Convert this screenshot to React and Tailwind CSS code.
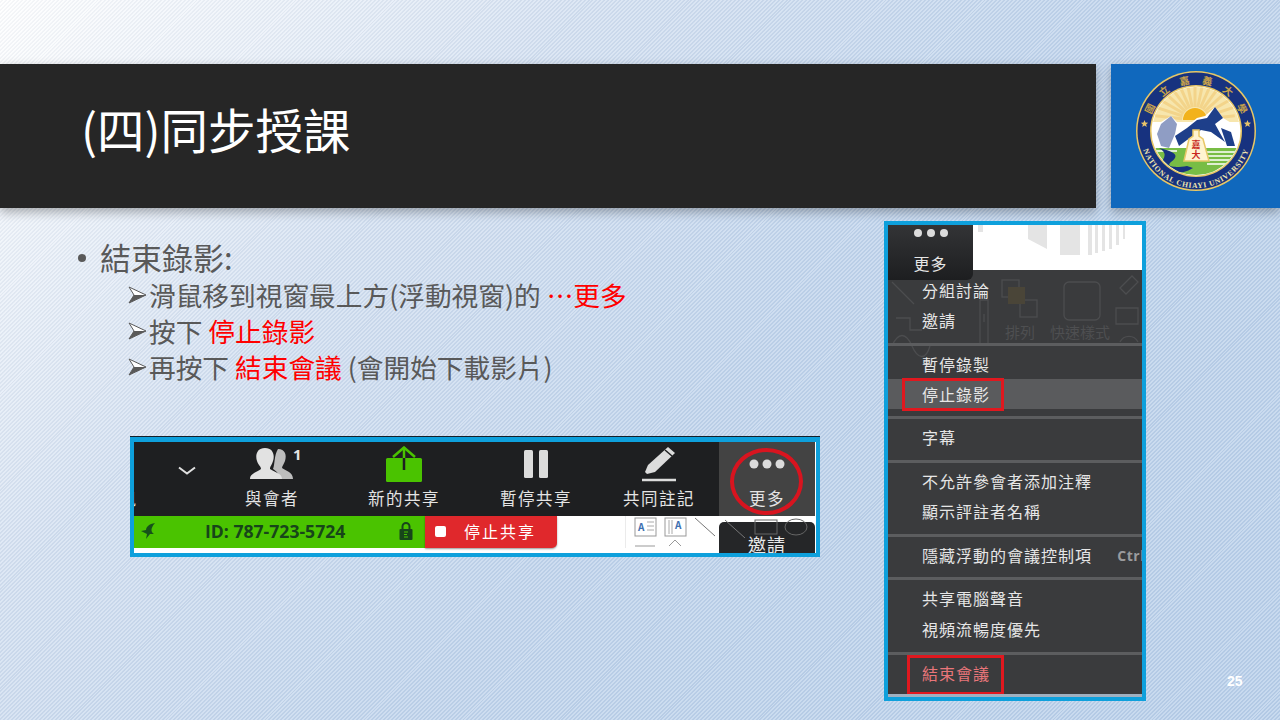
import React from 'react'

const cjk = { fontFamily: '"Noto Sans CJK TC", "Noto Sans", sans-serif' }

const sealChars = [['國', -64], ['立', -38.5], ['嘉', -13], ['義', 13], ['大', 38.5], ['學', 64]]

function Seal() {
  const rays = []
  for (let a = -84; a <= 84; a += 12) {
    const r = a * Math.PI / 180
    rays.push(
      <line key={a} x1={60 + Math.sin(r) * 13} y1={50 - Math.cos(r) * 13} x2={60 + Math.sin(r) * 40} y2={50 - Math.cos(r) * 40} stroke="#f3d48a" strokeWidth="3" />
    )
  }
  return (
    <svg width="122" height="122" viewBox="0 0 122 122">
      <defs>
        <path id="sealBottom" d="M 6.5 52 A 55.5 55.5 0 1 0 115.5 52" />
        <clipPath id="sealInner"><circle cx="61" cy="61" r="44" /></clipPath>
      </defs>
      <circle cx="61" cy="61" r="60" fill="#e8c766" />
      <circle cx="61" cy="61" r="58.5" fill="#17327f" />
      <circle cx="61" cy="61" r="46" fill="#e8c766" />
      <circle cx="61" cy="61" r="44.5" fill="#fff" />
      {sealChars.map(([c, a]) => (
        <text key={c} x="61" y="13.5" fill="#c9a24a" fontSize="10" fontWeight="700" textAnchor="middle" transform={`rotate(${a} 61 61)`} style={cjk}>{c}</text>
      ))}
      <text fill="#f0e6b0" fontSize="7.6" fontWeight="700" textAnchor="middle" letterSpacing="0.75" style={{ fontFamily: '"Liberation Serif", serif' }}>
        <textPath href="#sealBottom" startOffset="50%">NATIONAL CHIAYI UNIVERSITY</textPath>
      </text>
      <path d="M9.5 50 l1 2.5 2.6 .2 -2 1.7 .7 2.6 -2.3 -1.4 -2.3 1.4 .7 -2.6 -2 -1.7 2.6 -.2 Z" fill="#e9c46a" />
      <path d="M112.5 50 l1 2.5 2.6 .2 -2 1.7 .7 2.6 -2.3 -1.4 -2.3 1.4 .7 -2.6 -2 -1.7 2.6 -.2 Z" fill="#e9c46a" />
      <g clipPath="url(#sealInner)">
        <rect x="10" y="10" width="102" height="42" fill="#f7e6ad" />
        {rays}
        <path d="M48 50 A12 12 0 0 1 72 50 Z" fill="#f2b21c" />
        <path d="M16 64 L26 52 L36 46 L44 54 L52 56 L62 48 L70 46 L80 37 L88 48 L98 54 L108 64 L108 80 L16 80 Z" fill="#fff" />
        <path d="M26 54 L36 46 L42 54 L40 64 L34 78 L26 76 L22 64 Z" fill="#8f9dc4" />
        <path d="M40 66 L52 58 L62 50 L72 48 L80 37 L88 48 L80 54 L90 72 L76 62 L66 60 L52 70 L44 76 Z" fill="#1e3f8a" />
        <path d="M86 58 L96 62 L100 76 L92 76 Z" fill="#1e3f8a" />
        <path d="M10 78 L112 78 L112 112 L10 112 Z" fill="#78bd45" />
        <path d="M70 82 H106 M72 86 H106 M70 90 H104 M72 94 H100 M18 81 H42" stroke="#fff" strokeWidth="1.3" />
        <path d="M24 78 C42 82 44 86 36 92 C30 97 40 98 52 96 L58 98 C42 108 22 102 26 94 C28 88 34 84 24 78 Z" fill="#17327f" />
      </g>
      <path d="M58 60 L58 66 L54 69 L49 91 L74 91 L68 69 L64 66 L64 60 Z" fill="#fff4d0" stroke="#e8c766" strokeWidth="1.5" />
      <text x="61" y="78" fill="#c8281e" fontSize="9" fontWeight="700" textAnchor="middle" style={cjk}>嘉</text>
      <text x="61" y="88" fill="#c8281e" fontSize="9" fontWeight="700" textAnchor="middle" style={cjk}>大</text>
    </svg>
  )
}

function SubLine({ children }) {
  return (
    <div className="flex h-[36px] items-center text-[26.7px] text-[#595959]">
      <svg width="19" height="18" viewBox="0 0 19 18" className="mr-[2px] shrink-0">
        <path d="M1 1 L18 9 L1 17 L6 9 Z" fill="#fff" stroke="#595959" strokeWidth="1" />
        <path d="M6 9 L18 9 L1 17 Z" fill="#595959" />
      </svg>
      <span className="whitespace-pre">{children}</span>
    </div>
  )
}

function ToolItem({ width, label, children }) {
  return (
    <div className={`flex h-full flex-col items-center ${width}`}>
      <div className="flex h-[44px] w-full items-end justify-center">{children}</div>
      <div className="whitespace-nowrap text-[16.5px] leading-[24px] tracking-[1.5px] text-[#e4e4e4]">{label}</div>
    </div>
  )
}

function Toolbar() {
  return (
    <div className="relative ml-[130px] mt-[52px] h-[120px] w-[690px] overflow-hidden border-x-[4px] border-b-[4px] border-t-[5px] border-[#0ea0dc] bg-white shadow-[0_-1px_0_#14202a]">
      <div className="flex h-[74px] w-[681px] bg-[#1e1f21]">
        <div className="flex h-[44px] w-[88px] items-center justify-center pl-[18px] pt-[14px]">
          <svg width="20" height="10" viewBox="0 0 20 10"><path d="M2 1.5 L10 7.5 L18 1.5" fill="none" stroke="#e0e0e0" strokeWidth="2" /></svg>
        </div>
        <ToolItem width="w-[100px]" label="與會者">
          <div className="relative mb-[6px]">
            <svg width="44" height="32" viewBox="0 0 44 32" className="block">
              <path d="M28 1 C35 1 37 7 35 13 C34 16 32 18 32 20 C36 23 43 24 43 31 L30 31 C30 26 26 23 23 21 C25 16 24 7 28 1 Z" fill="#bdbdbd" />
              <path d="M15 0 C23 0 25 7 23 13 C22 17 20 18 20 21 C24 24 32 25 32 31 L0 31 C0 25 8 24 11 21 C11 18 8 17 7 13 C5 7 7 0 15 0 Z" fill="#e2e2e2" />
            </svg>
            <span className="absolute left-[43px] top-[-5px] text-[15px] font-bold leading-[22px] text-[#e4e4e4]" style={{ fontFamily: '"Open Sans", sans-serif' }}>1</span>
          </div>
        </ToolItem>
        <div className="w-[16px]" />
        <ToolItem width="w-[132px]" label="新的共享">
          <svg width="38" height="37" viewBox="0 0 38 37" className="mb-[3px]">
            <rect x="1" y="12" width="36" height="24" rx="1.5" fill="#4ac300" />
            <path d="M19 1 V12" stroke="#4ac300" strokeWidth="2.5" />
            <path d="M19 12 V24" stroke="#1e1f21" strokeWidth="2.5" />
            <path d="M8 11 L19 1.5 L30 11" fill="none" stroke="#4ac300" strokeWidth="2.5" />
          </svg>
        </ToolItem>
        <ToolItem width="w-[132px]" label="暫停共享">
          <svg width="26" height="29" viewBox="0 0 26 29" className="mb-[7px]">
            <rect x="1" y="0" width="9" height="28" rx="1.5" fill="#dcdcdc" />
            <rect x="16" y="0" width="9" height="28" rx="1.5" fill="#dcdcdc" />
          </svg>
        </ToolItem>
        <ToolItem width="w-[114px]" label="共同註記">
          <svg width="38" height="36" viewBox="0 0 38 36" className="mb-[4px]">
            <path d="M28 1 L35 7 L15 26 L7 28 L5 26 L8 19 Z" fill="#dcdcdc" />
            <path d="M25 4 L32 10" stroke="#1e1f21" strokeWidth="1.5" />
            <path d="M2 34 H36" stroke="#dcdcdc" strokeWidth="2.5" />
          </svg>
        </ToolItem>
        <div className="w-[3px]" />
        <div className="h-[74px] bg-[#434343]">
          <ToolItem width="w-[96px]" label="更多">
            <svg width="36" height="10" viewBox="0 0 36 10" className="mb-[17px]">
              <circle cx="5" cy="5" r="4.5" fill="#dcdcdc" />
              <circle cx="18" cy="5" r="4.5" fill="#dcdcdc" />
              <circle cx="31" cy="5" r="4.5" fill="#dcdcdc" />
            </svg>
          </ToolItem>
        </div>
      </div>
      <div className="flex h-[32px] w-full">
        <div className="flex h-[32px] w-[291px] items-center bg-[#4ac300] pb-[2px]">
          <svg width="18" height="18" viewBox="0 0 18 18" className="ml-[5px] shrink-0">
            <path d="M16 1 C10 2 7 5 7 8 L2 9 L8 12 L7 17 L11 12 L15 12 C12 10 11 7 16 1 Z" fill="#17521a" />
          </svg>
          <span className="ml-[48px] w-[194px] shrink-0 whitespace-nowrap text-[17.6px] font-bold text-[#17451a]" style={{ fontFamily: '"Open Sans", sans-serif' }}>ID: 787-723-5724</span>
          <svg width="14" height="20" viewBox="0 0 14 20" className="shrink-0">
            <path d="M3.5 9 V5.5 A3.5 3.5 0 0 1 10.5 5.5 V9" fill="none" stroke="#17451a" strokeWidth="2" />
            <rect x="0.5" y="8" width="13" height="11" rx="1" fill="#17451a" />
            <path d="M5 11 H9 M5 13.5 H8 M5 16 H9" stroke="#4ac300" strokeWidth="1.2" />
          </svg>
        </div>
        <div className="flex h-[32px] w-[132px] items-center rounded-br-[5px] bg-[#e0282c] pb-[2px] shadow-[0_1px_2px_rgba(0,0,0,0.4)]">
          <span className="ml-[10px] h-[11px] w-[11px] rounded-[2px] bg-white" />
          <span className="ml-[18px] whitespace-nowrap text-[16px] tracking-[2px] text-white">停止共享</span>
        </div>
        <div className="w-[68px]" />
        <svg width="94" height="32" viewBox="0 0 94 32" className="shrink-0">
          <path d="M0 0 V36" stroke="#d8d8d8" />
          <rect x="10" y="2" width="21" height="18" fill="#fff" stroke="#999" />
          <text x="13" y="15" fontSize="10" fontWeight="700" fill="#3e6fb0">A</text>
          <path d="M22 6 H29 M22 10 H29 M22 14 H29" stroke="#aaa" />
          <rect x="40" y="2" width="21" height="18" fill="#fff" stroke="#999" />
          <text x="50" y="13" fontSize="10" fontWeight="700" fill="#3e6fb0">A</text>
          <path d="M44 4 V18 M47 4 V18" stroke="#aaa" />
          <path d="M70 2 L90 20" stroke="#777" />
          <path d="M10 30 H30 M44 30 L50 24 L56 30" fill="none" stroke="#999" />
        </svg>
      </div>
      <div className="absolute left-[585px] top-[80px] flex h-[32px] w-[96px] justify-center rounded-t-[5px] bg-[#252628] pt-[10px] text-[18px] leading-[24px] tracking-[1px] text-[#e8e8e8]">邀請</div>
      <svg width="96" height="20" viewBox="0 0 96 20" className="absolute left-[585px] top-[76px]">
        <path d="M6 2 L26 20" stroke="#777" />
        <rect x="36" y="2" width="22" height="14" fill="none" stroke="#666" />
        <ellipse cx="77" cy="9" rx="11" ry="8" fill="none" stroke="#666" />
      </svg>
      <span className="absolute left-[-14px] top-[44px] text-[16px] leading-[24px] text-[#e4e4e4]">訊</span>
      <div className="absolute left-[596px] top-[6px] h-[67px] w-[73px] rounded-[50%] border-[4px] border-[#d8141f]" />
    </div>
  )
}

function MenuRow({ children, right, color = 'text-[#e6e6e6]', active, tall }) {
  return (
    <div className={`flex items-center justify-between overflow-hidden pl-[34px] text-[16px] tracking-[1px] ${tall ? 'h-[32px]' : 'h-[30px]'} ${color} ${active ? 'bg-[#5a5b5d]' : ''}`}>
      <span className="whitespace-nowrap">{children}</span>
      {right}
    </div>
  )
}

function MenuSep({ wide, tight }) {
  return <div className={`h-[3px] bg-[#5c5d5f] ${wide ? 'mt-[8px]' : 'mt-[7px]'} ${tight ? 'mb-[2px]' : 'mb-[3px]'}`} />
}

function MorePanel() {
  return (
    <div className="relative mt-[13px] h-[480px] w-[262px] overflow-hidden border-[4px] border-[#0ea0dc] bg-[#3a3b3d]" style={cjk}>
      <div className="relative h-[45px] bg-white">
        <svg width="170" height="30" viewBox="0 0 170 30" className="absolute left-[85px] top-0">
          <path d="M5 0 H10 V7 H5 Z M55 0 H74 V24 L55 14 Z M87 0 H107 V30 H87 Z M115 0 H119 V30 H115 Z M122 0 H125 V28 H122 Z M129 0 H132 V26 H129 Z M136 0 H139 V24 H136 Z M143 0 H146 V20 H143 Z M150 0 H152 V14 H150 Z" fill="#e4e4e4" />
        </svg>
      </div>
      <div className="relative pt-[5px]">
        <svg width="254" height="150" viewBox="0 0 254 150" className="absolute left-0 top-0">
          <g fill="none" stroke="#4c4d4f" strokeWidth="1.3">
            <path d="M4 12 L26 34" />
            <path d="M8 48 H22 V60 H34" />
            <path d="M4 76 C10 62 18 62 24 76 S38 90 42 76" />
            <rect x="114" y="10" width="17" height="17" />
            <rect x="132" y="30" width="17" height="17" />
            <rect x="120" y="17" width="17" height="17" fill="#4a4538" stroke="none" />
            <rect x="176" y="12" width="36" height="38" rx="5" />
            <path d="M92 30 H100 V74 H92 Z M96 44 V52" />
            <path d="M232 18 L244 6 L250 12 L238 24 Z M228 38 H250 V54 H228 Z M232 72 A 10 10 0 0 1 250 72" />
          </g>
          <text x="117" y="68" fontSize="15" fill="#4e4f51" style={cjk}>排列</text>
          <text x="162" y="68" fontSize="15" fill="#4e4f51" style={cjk}>快速樣式</text>
        </svg>
        <div className="relative">
          <MenuRow>分組討論</MenuRow>
          <MenuRow>邀請</MenuRow>
          <MenuSep wide />
          <MenuRow>暫停錄製</MenuRow>
          <MenuRow active>停止錄影</MenuRow>
          <MenuSep />
          <MenuRow>字幕</MenuRow>
          <MenuSep wide />
          <MenuRow>不允許參會者添加注釋</MenuRow>
          <MenuRow>顯示評註者名稱</MenuRow>
          <MenuSep wide />
          <MenuRow right={<span className="mr-[-3px] text-[14px] font-bold tracking-[0.5px] text-[#9a9b9d]" style={{ fontFamily: '"Open Sans", sans-serif' }}>Ctrl</span>}>隱藏浮動的會議控制項</MenuRow>
          <MenuSep tight />
          <MenuRow tall>共享電腦聲音</MenuRow>
          <MenuRow>視頻流暢度優先</MenuRow>
          <MenuSep wide />
          <MenuRow color="text-[#e8767a]">結束會議</MenuRow>
        </div>
      </div>
      <div className="absolute left-0 top-0 flex h-[55px] w-[85px] flex-col items-center rounded-br-[6px] bg-[linear-gradient(#333436,#1d1e20)] text-[16px] tracking-[1px] text-[#e6e6e6]">
        <svg width="36" height="10" viewBox="0 0 36 10" className="mt-[3px]">
          <circle cx="5" cy="5" r="4" fill="#dcdcdc" />
          <circle cx="18" cy="5" r="4" fill="#dcdcdc" />
          <circle cx="31" cy="5" r="4" fill="#dcdcdc" />
        </svg>
        <span className="mt-[13px] leading-[24px]">更多</span>
      </div>
      <div className="absolute left-[14px] top-[153px] h-[33px] w-[102px] border-[3px] border-[#e0181f]" />
      <div className="absolute left-[19px] top-[430px] h-[40px] w-[97px] border-[3px] border-[#e0181f]" />
      <div className="absolute bottom-0 left-0 h-[3px] w-full bg-[#9fb0c0]" />
    </div>
  )
}

export default function App() {
  return (
    <div className="relative h-[720px] w-[1280px] overflow-hidden bg-[repeating-linear-gradient(135deg,rgba(255,255,255,0.22)_0px,rgba(255,255,255,0.22)_1.4px,rgba(90,110,140,0.06)_1.4px,rgba(90,110,140,0.06)_2.8px),linear-gradient(135deg,#ffffff_0%,#d3e0f1_30%,#c0d4ec_55%,#b8cfea_100%)]" style={cjk}>
      <div className="flex pt-[64px]">
        <div className="flex h-[144px] w-[1096px] items-center bg-[#262626] pb-[14px] pl-[81px] shadow-[0_4px_10px_rgba(0,0,0,0.3)]">
          <h1 className="text-[47.5px] font-normal leading-none text-white">(四)同步授課</h1>
        </div>
        <div className="ml-[15px] flex h-[144px] w-[169px] items-start justify-center bg-[#1068bd] pt-[6px] shadow-[0_4px_10px_rgba(0,0,0,0.3)]">
          <Seal />
        </div>
      </div>
      <div className="flex">
        <div className="w-[884px] pt-[30px]">
          <div className="flex h-[39px] items-center pl-[78px] text-[#595959]">
            <span className="mr-[14px] h-[8px] w-[8px] rounded-full bg-[#595959]" />
            <span className="text-[31px]">結束錄影:</span>
          </div>
          <div className="pl-[128px]">
            <SubLine>滑鼠移到視窗最上方(浮動視窗)的 <span className="text-[#ff0000]">⋯更多</span></SubLine>
            <SubLine>按下 <span className="text-[#ff0000]">停止錄影</span></SubLine>
            <SubLine>再按下 <span className="text-[#ff0000]">結束會議</span> (會開始下載影片)</SubLine>
          </div>
          <Toolbar />
        </div>
        <MorePanel />
      </div>
      <div className="absolute left-[1227px] top-[671px] text-[14px] font-bold text-white" style={{ fontFamily: '"Liberation Sans", sans-serif' }}>25</div>
    </div>
  )
}
